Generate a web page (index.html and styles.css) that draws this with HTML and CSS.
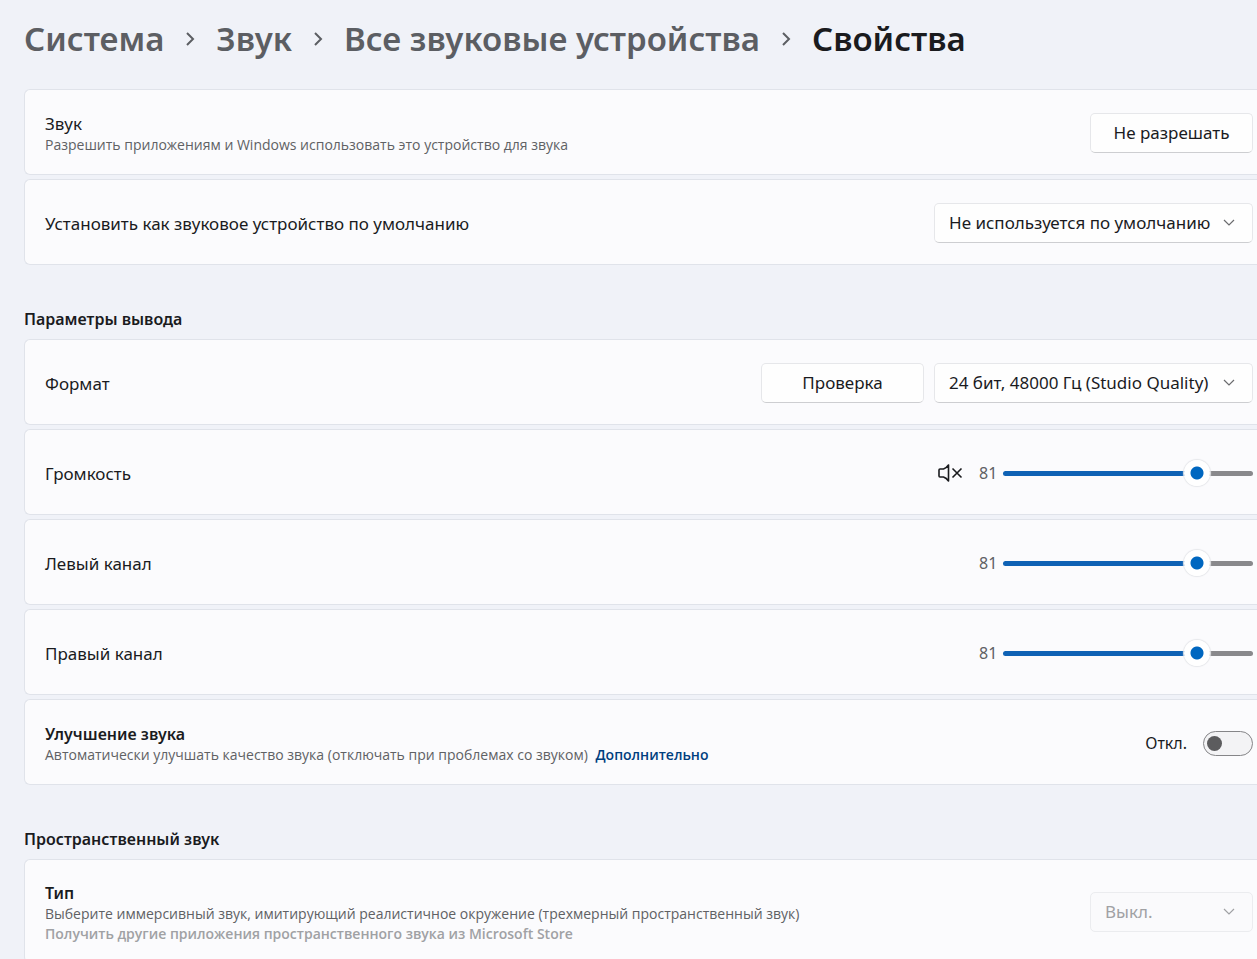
FILE: index.html
```html
<!DOCTYPE html>
<html lang="ru">
<head>
  <meta charset="UTF-8">
  <meta name="viewport" content="width=device-width, initial-scale=1.0">
  <title>Свойства</title>
  <link rel="stylesheet" href="styles.css">
</head>
<body>
  <nav class="breadcrumbs">
    <a href="#">Система</a>
    <svg class="crumb-arrow" viewBox="0 0 10 16"><path d="M2 2l6 6-6 6"/></svg>
    <a href="#">Звук</a>
    <svg class="crumb-arrow" viewBox="0 0 10 16"><path d="M2 2l6 6-6 6"/></svg>
    <a href="#">Все звуковые устройства</a>
    <svg class="crumb-arrow" viewBox="0 0 10 16"><path d="M2 2l6 6-6 6"/></svg>
    <h1>Свойства</h1>
  </nav>

  <main>
    <section class="group">
      <div class="card">
        <div class="card-text">
          <div class="card-title">Звук</div>
          <div class="card-subtitle">Разрешить приложениям и Windows использовать это устройство для звука</div>
        </div>
        <button class="btn" type="button">Не разрешать</button>
      </div>
      <div class="card">
        <label class="card-title" for="default-device">Установить как звуковое устройство по умолчанию</label>
        <div class="dropdown wide">
          <select id="default-device">
            <option>Не используется по умолчанию</option>
          </select>
          <svg viewBox="0 0 12 8"><path d="M1 1l5 5 5-5"/></svg>
        </div>
      </div>
    </section>

    <section class="group">
      <h2>Параметры вывода</h2>
      <div class="card">
        <label class="card-title" for="format">Формат</label>
        <div class="controls">
          <button class="btn" type="button">Проверка</button>
          <div class="dropdown wide">
            <select id="format">
              <option>24 бит, 48000 Гц (Studio Quality)</option>
            </select>
            <svg viewBox="0 0 12 8"><path d="M1 1l5 5 5-5"/></svg>
          </div>
        </div>
      </div>
      <div class="card">
        <label class="card-title" for="volume">Громкость</label>
        <div class="slider">
          <button class="mute" type="button" aria-label="Включить звук">
            <svg viewBox="0 0 26 20"><path d="M2 7Q2 6 3 6H6.500Q9.500 5 11.500 2V18Q9.500 15 6.500 14H3Q2 14 2 13Z"/><path d="M15.500 5.500l9 9M24.500 5.500l-9 9"/></svg>
          </button>
          <output for="volume">81</output>
          <input type="range" id="volume" min="0" max="100" value="81">
        </div>
      </div>
      <div class="card">
        <label class="card-title" for="left">Левый канал</label>
        <div class="slider">
          <output for="left">81</output>
          <input type="range" id="left" min="0" max="100" value="81">
        </div>
      </div>
      <div class="card">
        <label class="card-title" for="right">Правый канал</label>
        <div class="slider">
          <output for="right">81</output>
          <input type="range" id="right" min="0" max="100" value="81">
        </div>
      </div>
      <div class="card">
        <div class="card-text">
          <div class="card-title strong">Улучшение звука</div>
          <div class="card-subtitle">Автоматически улучшать качество звука (отключать при проблемах со звуком) <a href="#">Дополнительно</a></div>
        </div>
        <label class="switch">
          <span>Откл.</span>
          <input type="checkbox">
        </label>
      </div>
    </section>

    <section class="group">
      <h2>Пространственный звук</h2>
      <div class="card">
        <div class="card-text">
          <label class="card-title strong" for="spatial">Тип</label>
          <div class="card-subtitle">Выберите иммерсивный звук, имитирующий реалистичное окружение (трехмерный пространственный звук)</div>
          <a class="store-link" href="#">Получить другие приложения пространственного звука из Microsoft Store</a>
        </div>
        <div class="dropdown">
          <select id="spatial" disabled>
            <option>Выкл.</option>
          </select>
          <svg viewBox="0 0 12 8"><path d="M1 1l5 5 5-5"/></svg>
        </div>
      </div>
    </section>
  </main>

  <script>
    // keep the number and the blue part of the track in step with the thumb
    document.querySelectorAll('input[type=range]').forEach(range => {
      const out = range.parentElement.querySelector('output');
      const update = () => {
        out.textContent = range.value;
        range.style.setProperty('--fill', range.value + '%');
      };
      range.addEventListener('input', update);
      update();
    });

    document.querySelector('.switch input').addEventListener('change', e => {
      document.querySelector('.switch span').textContent = e.target.checked ? 'Вкл.' : 'Откл.';
    });
  </script>
</body>
</html>
```
FILE: styles.css
```css
* {
  box-sizing: border-box;
}
html {
  scrollbar-width: none;
}
body {
  margin: 0;
  padding: 16px 0 0 24px;
  font-family: "Segoe UI", "Noto Sans", "Open Sans", sans-serif;
  font-size: 17px;
  line-height: 24px;
  background-color: #f0f2f8;
  color: #1a1b1e;
}
.breadcrumbs {
  display: flex;
  align-items: center;
  height: 46px;
  margin-bottom: 27px;
  font-size: 33px;
  font-weight: 600;
  white-space: nowrap;
}
.breadcrumbs a {
  color: #5c5e63;
  text-decoration: none;
}
.breadcrumbs h1 {
  margin: 0;
  font-size: 33px;
  font-weight: 600;
}
.crumb-arrow {
  width: 10px;
  height: 16px;
  margin: 0 21px;
  fill: none;
  stroke: #5c5e63;
  stroke-width: 2;
}
.group {
  display: flex;
  flex-direction: column;
  gap: 4px;
  margin-bottom: 42px;
}
.group h2 {
  margin: 0 0 4px;
  font-size: 16px;
  font-weight: 600;
}
.card {
  display: flex;
  justify-content: space-between;
  align-items: center;
  min-height: 86px;
  padding: 20px 4px 18px 20px;
  background-color: #fbfbfd;
  border: 1px solid #e0e3ea;
  border-right: none;
  border-radius: 6px 0 0 6px;
}
.card-text {
  display: flex;
  flex-direction: column;
}
.card-title {
  padding-top: 2px;
  line-height: 22px;
}
.card-title.strong {
  font-size: 16px;
  font-weight: 600;
}
.card-subtitle,
.store-link {
  font-family: "Segoe UI", "Open Sans", sans-serif;
  font-size: 14px;
  line-height: 20px;
  color: #606164;
}
.card-subtitle a {
  margin-left: 4px;
  font-weight: 600;
  color: #003e7e;
  text-decoration: none;
}
.store-link {
  font-weight: 600;
  color: #a0a1a4;
  text-decoration: none;
}
.controls {
  display: flex;
  gap: 10px;
}
.btn,
.dropdown select {
  width: 163px;
  height: 40px;
  font: inherit;
  color: inherit;
  background-color: #fefefe;
  border: 1px solid #e6e7ea;
  border-bottom-color: #cdced1;
  border-radius: 5px;
}
.btn:hover,
.dropdown select:hover {
  background-color: #f8f8fa;
}
.dropdown {
  position: relative;
}
.dropdown select {
  appearance: none;
  display: block;
  padding: 0 14px;
}
.dropdown.wide select {
  width: 319px;
}
.dropdown select:disabled {
  color: #a0a1a4;
  background-color: #fafafc;
  border-color: #ebecef;
  opacity: 1;
}
.dropdown svg {
  position: absolute;
  right: 18px;
  top: 16px;
  width: 12px;
  height: 8px;
  fill: none;
  stroke: #6a6b6e;
  stroke-width: 1.2;
  pointer-events: none;
}
.dropdown select:disabled + svg {
  stroke: #a0a1a4;
}
.slider {
  display: flex;
  align-items: center;
}
.slider output {
  width: 24px;
  font-size: 16px;
  color: #606164;
}
.mute {
  width: 26px;
  height: 20px;
  margin-right: 16px;
  padding: 0;
  border: none;
  background: none;
}
.mute svg {
  display: block;
  width: 26px;
  height: 20px;
  fill: none;
  stroke: #1a1b1e;
  stroke-width: 1.6;
  stroke-linejoin: round;
}
input[type=range] {
  appearance: none;
  width: 250px;
  height: 26px;
  margin: 0;
  background: none;
}
input[type=range]::-webkit-slider-runnable-track {
  height: 5px;
  border-radius: 3px;
  background: linear-gradient(to right, #0f62b5 var(--fill), #89898c var(--fill));
}
input[type=range]::-webkit-slider-thumb {
  appearance: none;
  width: 26px;
  height: 26px;
  margin-top: -11px;
  border-radius: 50%;
  background: radial-gradient(circle, #0067c0 6px, #fff 7px);
  box-shadow: 0 0 1px 1px #e6e7ea;
}
.switch {
  display: flex;
  align-items: center;
  gap: 16px;
}
.switch span {
  font-size: 16px;
}
.switch input {
  appearance: none;
  display: flex;
  align-items: center;
  width: 50px;
  height: 25px;
  margin: 0;
  padding: 0 3px;
  background-color: #f3f3f5;
  border: 1px solid #858588;
  border-radius: 13px;
}
.switch input::before {
  content: "";
  width: 15px;
  height: 15px;
  border-radius: 50%;
  background-color: #5c5c5e;
}
.switch input:checked {
  justify-content: flex-end;
  background-color: #0067c0;
  border-color: #0067c0;
}
.switch input:checked::before {
  background-color: #fff;
}
```
